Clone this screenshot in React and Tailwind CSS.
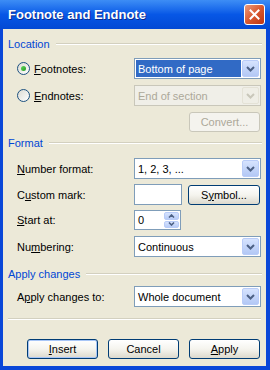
import React from "react";

function Chevron({ color = "#4D6185" }) {
  return (
    <svg width="9" height="6" viewBox="0 0 9 6">
      <polyline points="1,1 4.5,4.5 8,1" fill="none" stroke={color} strokeWidth="2" />
    </svg>
  );
}

function DropBtn({ disabled }) {
  return (
    <div
      className={
        "w-[17px] h-full rounded-[2px] flex items-center justify-center border " +
        (disabled
          ? "border-[#E4E2D6] bg-[#EFEEE6]"
          : "border-[#B9CCF8] bg-gradient-to-b from-[#D6E3FE] to-[#B3C8F5]")
      }
    >
      <Chevron color={disabled ? "#C9C7BA" : "#4D6185"} />
    </div>
  );
}

function Combo({ text, selected, disabled }) {
  return (
    <div
      className={
        "w-[127px] h-[21px] border flex items-stretch p-[1px] " +
        (disabled ? "border-[#C9C7BA] bg-[#F0EFE8]" : "border-[#7F9DB9] bg-white")
      }
    >
      <div className="flex-1 flex items-stretch pr-[1px]">
        <div
          className={
            "flex-1 flex items-center pl-[2px] " +
            (selected ? "bg-[#316AC5] text-white" : disabled ? "text-[#ACA899]" : "text-black")
          }
        >
          {text}
        </div>
      </div>
      <DropBtn disabled={disabled} />
    </div>
  );
}

function Btn({ children, w = "w-[71px]", def, disabled }) {
  return (
    <div
      className={
        w +
        " h-[20px] rounded-[3px] border flex items-center justify-center " +
        (disabled
          ? "border-[#C9C7BA] bg-[#F4F3EE] text-[#ACA899]"
          : "border-[#003C74] bg-gradient-to-b from-white via-[#F5F4EE] to-[#DCD9CD] text-black") +
        (def ? " shadow-[inset_0_0_0_1px_#A8C6F7]" : "")
      }
    >
      {children}
    </div>
  );
}

function Radio({ checked }) {
  return (
    <div className="w-[13px] h-[13px] rounded-full border border-[#1C5180] bg-gradient-to-br from-[#DCDBD3] to-white flex items-center justify-center">
      {checked && <div className="w-[5px] h-[5px] rounded-full bg-gradient-to-br from-[#62D85D] to-[#1F9A1F]" />}
    </div>
  );
}

function Group({ label }) {
  return (
    <div className="flex items-center h-[14px] pl-[5px] pr-[4px]">
      <span className="text-[#0046D5]">{label}</span>
      <div className="flex-1 ml-[6px] h-[2px] border-t border-[#D3D0BF] border-b border-b-white" />
    </div>
  );
}

function Row({ label, children, className = "" }) {
  return (
    <div className={"flex items-center pl-[14px] " + className}>
      <div className="w-[117px]">{label}</div>
      {children}
    </div>
  );
}

export default function App() {
  return (
    <div className="w-[270px] h-[370px] flex flex-col bg-[#0A47D8] font-['Liberation_Sans',Arial,sans-serif] text-[11px] leading-[14px] select-none">
      <div className="h-[29px] flex items-center justify-between pl-[8px] pr-[5px] bg-gradient-to-b from-[#3D8DF5] via-[#0757E6] to-[#0349D4]">
        <span className="text-white font-bold text-[13px] [text-shadow:1px_1px_0_#0B2A8E]">Footnote and Endnote</span>
        <div className="w-[21px] h-[21px] rounded-[3px] border border-white bg-gradient-to-br from-[#E99A7C] via-[#D8582F] to-[#BE3411] flex items-center justify-center">
          <svg width="11" height="11" viewBox="0 0 11 11">
            <path d="M1.5 1.5 L9.5 9.5 M9.5 1.5 L1.5 9.5" stroke="white" strokeWidth="2" strokeLinecap="square" />
          </svg>
        </div>
      </div>
      <div className="flex-1 ml-[3px] mr-[4px] mb-[4px] bg-[#ECE9D8] flex flex-col pt-[8px]">
        <Group label="Location" />
        <div className="flex items-center pl-[14px] mt-[7px] h-[21px]">
          <div className="w-[117px] flex items-center gap-[4px]">
            <Radio checked />
            <span><u>F</u>ootnotes:</span>
          </div>
          <Combo text="Bottom of page" selected />
        </div>
        <div className="flex items-center pl-[14px] mt-[6px] h-[21px]">
          <div className="w-[117px] flex items-center gap-[4px]">
            <Radio />
            <span><u>E</u>ndnotes:</span>
          </div>
          <Combo text="End of section" disabled />
        </div>
        <div className="flex justify-end pr-[6px] mt-[6px]">
          <Btn disabled>Convert...</Btn>
        </div>
        <div className="mt-[4px]">
          <Group label="Format" />
        </div>
        <Row className="mt-[8px]" label={<span><u>N</u>umber format:</span>}>
          <Combo text="1, 2, 3, ..." />
        </Row>
        <Row className="mt-[5px]" label={<span>C<u>u</u>stom mark:</span>}>
          <div className="w-[48px] h-[21px] border border-[#7F9DB9] bg-white" />
          <div className="ml-[6px]">
            <Btn w="w-[72px]">S<u>y</u>mbol...</Btn>
          </div>
        </Row>
        <Row className="mt-[5px]" label={<span><u>S</u>tart at:</span>}>
          <div className="w-[47px] h-[20px] border border-[#7F9DB9] bg-white flex items-stretch p-[1px]">
            <div className="flex-1 flex items-center pl-[2px]">0</div>
            <div className="w-[15px] flex flex-col gap-[1px]">
              <div className="flex-1 rounded-[2px] border border-[#B9CCF8] bg-gradient-to-b from-[#D6E3FE] to-[#B8CCF7] flex items-center justify-center">
                <svg width="7" height="4" viewBox="0 0 7 4"><polyline points="1,3.5 3.5,1 6,3.5" fill="none" stroke="#4D6185" strokeWidth="1.6" /></svg>
              </div>
              <div className="flex-1 rounded-[2px] border border-[#B9CCF8] bg-gradient-to-b from-[#D6E3FE] to-[#B8CCF7] flex items-center justify-center">
                <svg width="7" height="4" viewBox="0 0 7 4"><polyline points="1,0.5 3.5,3 6,0.5" fill="none" stroke="#4D6185" strokeWidth="1.6" /></svg>
              </div>
            </div>
          </div>
        </Row>
        <Row className="mt-[6px]" label={<span>Nu<u>m</u>bering:</span>}>
          <Combo text="Continuous" />
        </Row>
        <div className="mt-[10px]">
          <Group label="Apply changes" />
        </div>
        <Row className="mt-[5px]" label={<span>A<u>p</u>ply changes to:</span>}>
          <Combo text="Whole document" />
        </Row>
        <div className="mt-[11px] mx-[5px] h-[2px] border-t border-[#D3D0BF] border-b border-b-white" />
        <div className="mt-[19px] flex pl-[24px] gap-[10px]">
          <Btn def><span><u>I</u>nsert</span></Btn>
          <Btn>Cancel</Btn>
          <Btn><span><u>A</u>pply</span></Btn>
        </div>
      </div>
    </div>
  );
}
